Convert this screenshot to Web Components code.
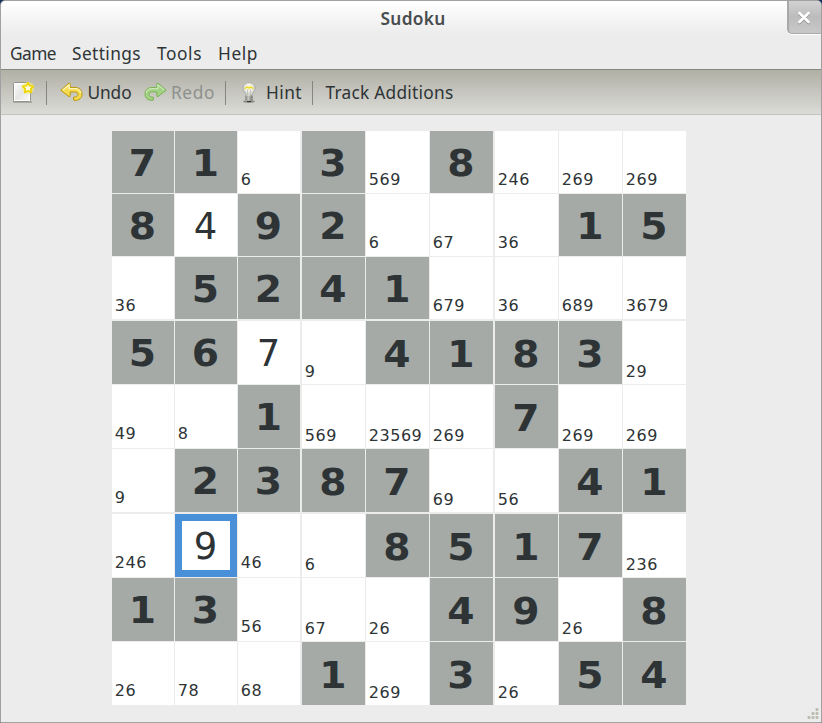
<!DOCTYPE html>
<html lang="en">
<head>
<meta charset="utf-8">
<title>Sudoku</title>
<style>
html,body{margin:0;height:100%;background:#16305f;overflow:hidden}
</style>
</head>
<body>
<app-window>
  <title-bar slot="title">Sudoku</title-bar>
  <menu-bar slot="menu">
    <fit-label fit="46">Game</fit-label>
    <fit-label fit="69">Settings</fit-label>
    <fit-label fit="45">Tools</fit-label>
    <fit-label fit="40">Help</fit-label>
  </menu-bar>
  <tool-bar slot="tools"></tool-bar>
  <sudoku-board></sudoku-board>
</app-window>
<script>
function shadow(el, html){ el.attachShadow({mode:'open'}).innerHTML = html; }

/* Label whose tracking is adjusted to give a set advance width. */
class FitLabel extends HTMLElement {
  constructor(){ super(); shadow(this, `<style>:host{display:inline-block;white-space:nowrap}span{display:inline-block}</style><span><slot></slot></span>`); }
  connectedCallback(){
    const s = this.shadowRoot.querySelector('span'), want = +this.getAttribute('fit');
    this.style.width = want + 'px';
    const n = this.textContent.trim().length;
    s.style.letterSpacing = ((want - s.getBoundingClientRect().width) / n).toFixed(3) + 'px';
  }
}

class AppWindow extends HTMLElement {
  constructor(){ super(); shadow(this, `<style>
    :host{display:flex;flex-direction:column;box-sizing:border-box;width:822px;height:723px;position:relative;
      border:1px solid #a1a1a1;border-radius:5px 5px 0 0;overflow:hidden;
      background:linear-gradient(#fff,#ececec 34px,#ececec);
      font:17.3px/24px "Noto Sans","Open Sans",sans-serif;color:#2e3436}
    main{padding:16px 0 0 111px}
    svg{position:absolute;right:2px;bottom:2px}
    </style><slot name="title"></slot><slot name="menu"></slot><slot name="tools"></slot><main><slot></slot></main>
    <svg width="12" height="12" fill="#bcbcb0"><rect x="8.5" width="3" height="3" rx="1"/><rect x="4.5" y="4" width="3" height="3" rx="1"/><rect x="8.5" y="4" width="3" height="3" rx="1"/><rect x=".5" y="8" width="3" height="3" rx="1"/><rect x="4.5" y="8" width="3" height="3" rx="1"/><rect x="8.5" y="8" width="3" height="3" rx="1"/></svg>`); }
}

class TitleBar extends HTMLElement {
  constructor(){ super(); shadow(this, `<style>
    :host{display:grid;grid-template-columns:1fr 34px;height:35px;font-weight:600;color:#484c4e}
    fit-label{margin:6px 0 0 379.5px;justify-self:start}
    .close{box-sizing:border-box;height:33px;border:1px solid #a9a9a9;border-width:0 0 1px 2px;border-radius:0 0 0 5px;
      background:linear-gradient(#d2d2d2,#bcbcbc 50%,#c8c8c8);box-shadow:0 1px #fff;display:block}
    svg{display:block;margin:10px 0 0 8px}
    </style><fit-label fit="65">Sudoku</fit-label>
    <div class="close"><svg width="14" height="14"><path d="M2.4 3l9.2 9M11.6 3L2.4 12" stroke="#909090" stroke-width="2.6" stroke-linecap="round"/><path d="M2.4 2l9.2 9M11.6 2L2.4 11" stroke="#fff" stroke-width="2.6" stroke-linecap="round"/></svg></div>`); }
}

class MenuBar extends HTMLElement {
  constructor(){ super(); shadow(this, `<style>:host{display:flex;height:33px;gap:16px;padding:6px 0 0 9px;box-sizing:border-box}</style><slot></slot>`); }
}

const ARROW = 'M.8 8.2L9 1.2Q10.2.8 10.2 2.2V5.4H15C19 5.4 22 8 22 12S19 18.4 15 18.4L13.6 18V15.2C16.5 15.2 18 14.2 18 12.3S16.5 9.9 14.5 9.9H10.2V13.4Q10.2 15 9 14.6Z';
class ToolIcon extends HTMLElement {
  connectedCallback(){
    const art = {
      new: `<svg width="22" height="22"><defs><linearGradient id="p" x2="1" y2="1"><stop stop-color="#fff"/><stop offset=".5" stop-color="#e6e7e5"/><stop offset="1" stop-color="#fafafa"/></linearGradient></defs>
        <path d="M1 21h19" stroke="#77776d" stroke-width="1.4" opacity=".6"/><rect x="1.5" y="1.5" width="17" height="19" rx="1" fill="url(#p)" stroke="#91938d"/><rect x="2.5" y="2.5" width="15" height="17" fill="none" stroke="#fff"/>
        <circle cx="16" cy="7" r="6" fill="#f8ef85" opacity=".7"/><path d="M16 1.6l1.6 3.2 3.8.5-2.7 2.6.6 3.7-3.3-1.8-3.3 1.8.6-3.7-2.7-2.6 3.8-.5z" fill="#fffde0" stroke="#edd400" stroke-width="1.6" stroke-linejoin="round"/></svg>`,
      undo: `<svg width="24" height="20"><path d="${ARROW}" fill="#f5dc50" stroke="#bd9605"/><path d="M2.8 8L9.1 2.9V6.6H15c3 0 5.5 2 5.8 4.5" fill="none" stroke="#fff6bd" stroke-width="1.3"/></svg>`,
      redo: `<svg width="24" height="20"><g transform="matrix(-1 0 0 1 23 0)"><path d="${ARROW}" fill="#a2d184" stroke="#79b257"/><path d="M2.8 8L9.1 2.9V6.6H15c3 0 5.5 2 5.8 4.5" fill="none" stroke="#cbe7b7" stroke-width="1.2"/></g></svg>`,
      hint: `<svg width="16" height="22"><defs><radialGradient id="b" cy=".4"><stop stop-color="#fffbbd"/><stop offset=".6" stop-color="#eeeee7"/><stop offset="1" stop-color="#d2d3ce"/></radialGradient><linearGradient id="m"><stop stop-color="#84867f"/><stop offset=".4" stop-color="#f4f4f0"/><stop offset="1" stop-color="#74766f"/></linearGradient></defs>
        <ellipse cx="8" cy="19.5" rx="6" ry="1.5" fill="#55574f" opacity=".55"/><path d="M8 .6c-3.8 0-6 2.7-6 5.7 0 3.4 2.8 4.3 3 7.3h6c.2-3 3-3.9 3-7.3 0-3-2.2-5.7-6-5.7z" fill="url(#b)" stroke="#a7a9a1" stroke-width=".9"/>
        <path d="M4.2 7.1C4 4.7 7 5 8 6c1-1 4-1.3 3.8 1.1" fill="none" stroke="#eedc2c" stroke-width="1.4"/><path d="M6.6 7.5v5.5M9.4 7.5v5.5" stroke="#b7b8ae" stroke-width=".8"/>
        <rect x="4.5" y="13.2" width="7" height="5.8" rx="1" fill="url(#m)"/><path d="M4.5 15h7M4.5 17h7" stroke="#777970" stroke-width=".7"/><path d="M6 19.3h4" stroke="#363832" stroke-width="1.3"/></svg>`
    };
    shadow(this, `<style>:host{display:block}svg{display:block}</style>` + art[this.getAttribute('name')]);
  }
}

class ToolBar extends HTMLElement {
  constructor(){ super(); shadow(this, `<style>
    :host{display:flex;box-sizing:border-box;height:46px;border-top:1px solid #878781;border-bottom:1px solid #c2c2c0;
      background:linear-gradient(#b1b0a5,#dbdbd8);padding:11px 0 0 11px}
    i{width:1px;height:24px;background:#85867f;flex:none}
    tool-icon{flex:none}
    .off{color:#8d918d}
    </style>
    <tool-icon name="new"></tool-icon><i style="margin-left:12px"></i>
    <tool-icon name="undo" style="margin:1px 0 0 13px"></tool-icon><fit-label fit="44" style="margin-left:3.5px">Undo</fit-label>
    <tool-icon name="redo" style="margin:1px 0 0 12px"></tool-icon><fit-label class="off" fit="44" style="margin-left:3.5px">Redo</fit-label>
    <i style="margin-left:10px"></i>
    <tool-icon name="hint" style="margin:1px 0 0 15px"></tool-icon><fit-label fit="36" style="margin-left:9px">Hint</fit-label>
    <i style="margin-left:10px"></i><fit-label fit="128" style="margin-left:12.5px">Track Additions</fit-label>`); }
}

/* kind: given (bold on grey), entry (player's digit), note (candidates) */
class SudokuCell extends HTMLElement {
  constructor(){ super(); shadow(this, `<style>
    :host{display:block;background:#fff;box-sizing:border-box;font-family:"DejaVu Sans",sans-serif;overflow:hidden;white-space:nowrap}
    span{display:block;text-align:center;font-size:37px;line-height:44px;padding-top:11px;margin-right:1px}
    :host([kind=given]){background:#a5aaa6}
    :host([kind=given]) span{font-weight:700;transform:scaleX(1.06)}
    :host([kind=note]) span{text-align:left;font-size:16px;line-height:20px;padding:39px 0 0 2.7px;margin:0;letter-spacing:.55px}
    :host([kind=note][low]) span{padding-top:41px}
    :host([low]) span{padding-top:12px}
    :host([selected]){border:7px solid #4a90d9}
    :host([selected]) span{padding-top:4px}
    </style><span><slot></slot></span>`); }
}

/* The 2px tracks separate the 3x3 boxes, the 1px tracks the cells in a box. */
class SudokuBoard extends HTMLElement {
  constructor(){ super(); shadow(this, `<style>
      :host{display:grid;width:574px;
        grid-template-columns:62px 1px 62px 1px 62px 2px 63px 1px 63px 1px 63px 2px 63px 1px 63px 1px 63px;
        grid-template-rows:62px 1px 62px 1px 62px 2px 63px 1px 63px 1px 63px 2px 63px 1px 63px 1px 63px}
    </style>`);
    const rows = [
      '*7 *1 6 *3 569 *8 246 269 269',
      '*8 =4 *9 *2 6 67 36 *1 *5',
      '36 *5 *2 *4 *1 679 36 689 3679',
      '*5 *6 =7 9 *4 *1 *8 *3 29',
      '49 8 *1 569 23569 269 *7 269 269',
      '9 *2 *3 *8 *7 69 56 *4 *1',
      '246 #9 46 6 *8 *5 *1 *7 236',
      '*1 *3 56 67 26 *4 *9 26 *8',
      '26 78 68 *1 269 *3 26 *5 *4'];
    rows.forEach((row, r) => row.split(' ').forEach((t, c) => {
      const cell = document.createElement('sudoku-cell'), k = t[0];
      cell.setAttribute('kind', k === '*' ? 'given' : k === '=' || k === '#' ? 'entry' : 'note');
      if (k === '#') cell.setAttribute('selected', '');
      if (r > 2 && c > 2) cell.setAttribute('low', '');
      cell.textContent = t.replace(/^[*=#]/, '');
      cell.style.gridArea = (r * 2 + 1) + '/' + (c * 2 + 1);
      this.shadowRoot.append(cell);
    }));
  }
}

/* Labels are defined last: they measure themselves in the inherited font. */
customElements.define('app-window', AppWindow);
customElements.define('title-bar', TitleBar);
customElements.define('menu-bar', MenuBar);
customElements.define('tool-bar', ToolBar);
customElements.define('tool-icon', ToolIcon);
customElements.define('sudoku-cell', SudokuCell);
customElements.define('sudoku-board', SudokuBoard);
customElements.define('fit-label', FitLabel);
</script>
</body>
</html>
